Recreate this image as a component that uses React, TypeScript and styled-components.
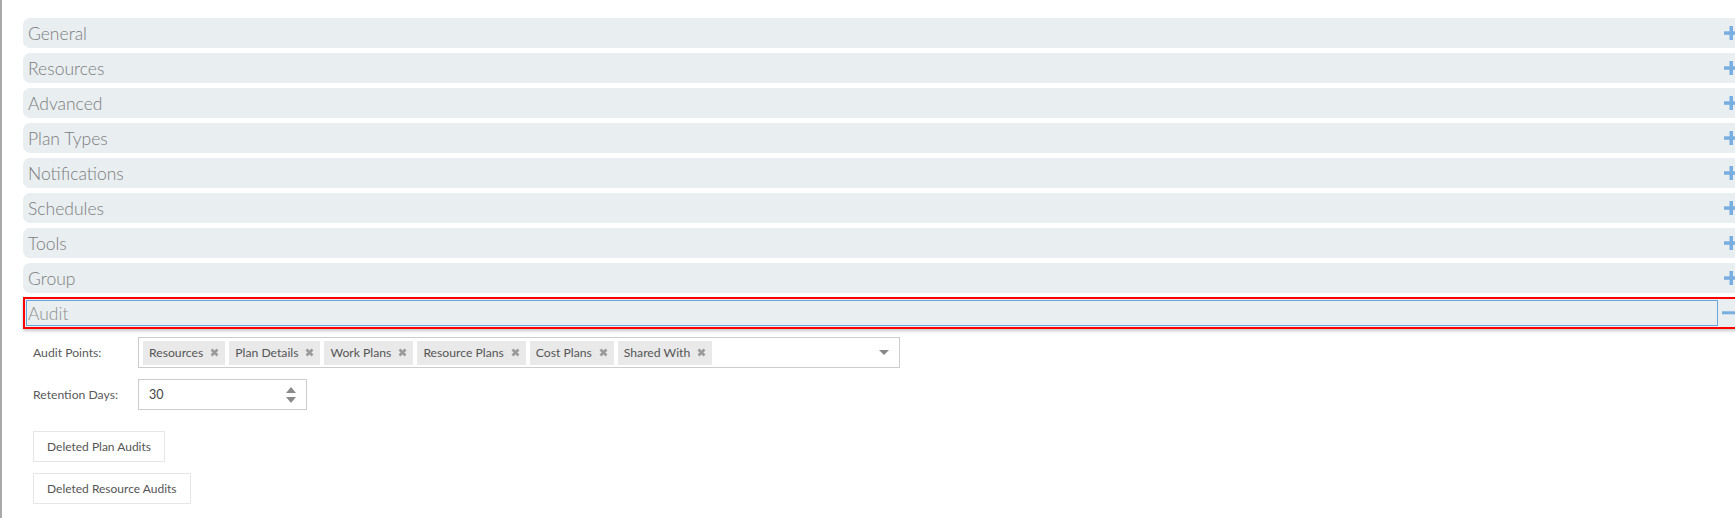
import React, { FC, ReactElement } from 'react';
import styled, { createGlobalStyle, css } from 'styled-components';

const GlobalStyle = createGlobalStyle`
  html, body {
    margin: 0;
    padding: 0;
    overflow: hidden;
    background: #fff;
  }

  body {
    font-family: Lato, "Open Sans", "Liberation Sans", sans-serif;
  }
`;

const Page = styled.div`
  box-sizing: border-box;
  width: calc(100vw + 5px);
  min-height: 518px;
  border-left: 2px solid #a9a9a9;
  padding: 18px 0 0 21px;
  display: flex;
  flex-direction: column;
`;

const Accordion = styled.div`
  display: flex;
  flex-direction: column;
  gap: 5px;
`;

interface HeaderProps {
  active?: boolean;
};

const Header = styled.div<HeaderProps>`
  box-sizing: border-box;
  display: flex;
  align-items: center;
  gap: 4px;
  height: 30px;
  padding: 0 2px 0 5px;
  background: #e9eef1;
  border-radius: 7px 0 0 7px;

  ${({ active }) =>
  active &&
  css`
    height: 32px;
    margin: -1px 0;
    padding: 1px 2px 1px 1px;
    border: 2px solid #ff0000;
    border-radius: 0;
    box-shadow: 0 2px 3px rgba(0, 0, 0, 0.22);
  `}
`;

const Title = styled.div<HeaderProps>`
  box-sizing: border-box;
  flex: 1;
  font-size: 17.5px;
  font-weight: 300;
  color: #7c7c7c;
  white-space: nowrap;

  ${({ active }) =>
  active &&
  css`
    align-self: stretch;
    display: flex;
    align-items: center;
    padding-left: 1px;
    border: 1px solid #6aa6de;
    color: #8e8e8e;
  `}
`;

const ToggleIcon = styled.svg`
  flex: none;
  width: 14px;
  height: 14px;
  fill: #78aee0;
`;

const Body = styled.div`
  display: flex;
  flex-direction: column;
  padding: 9px 0 0 10px;
`;

const FieldRow = styled.div`
  display: grid;
  grid-template-columns: 105px auto;
  align-items: center;
  justify-content: start;
  margin-bottom: 11px;
`;

const Label = styled.div`
  font-size: 12.2px;
  color: #5a5a5a;
`;

const MultiSelect = styled.div`
  box-sizing: border-box;
  display: flex;
  align-items: center;
  gap: 4px;
  width: 762px;
  height: 31px;
  padding: 0 10px 0 4px;
  border: 1px solid #ccc;
`;

const Tag = styled.div`
  display: flex;
  align-items: center;
  gap: 7px;
  height: 24px;
  padding: 0 6px;
  background: #e9e9e9;
  font-size: 12.2px;
  color: #555;
  white-space: nowrap;
`;

const TagClose = styled.svg`
  width: 9px;
  height: 9px;
  stroke: #9a9a9a;
  stroke-width: 2.6;
`;

const Caret = styled.svg`
  margin-left: auto;
  width: 10px;
  height: 5px;
  fill: #888;
`;

const NumberBox = styled.div`
  box-sizing: border-box;
  display: flex;
  align-items: center;
  width: 169px;
  height: 31px;
  padding: 0 10px;
  border: 1px solid #ccc;
  font-size: 12.5px;
  color: #444;
`;

const Spinner = styled.div`
  margin-left: auto;
  display: flex;
  flex-direction: column;
  gap: 4px;
`;

const SpinArrow = styled.svg`
  display: block;
  width: 10px;
  height: 6px;
  fill: #8a8a8a;
`;

const Buttons = styled.div`
  display: flex;
  flex-direction: column;
  align-items: flex-start;
  gap: 11px;
  margin-top: 10px;
`;

const Button = styled.button`
  box-sizing: border-box;
  height: 31px;
  padding: 0 13px;
  background: #fff;
  border: 1px solid #e6e6e6;
  font-family: inherit;
  font-size: 12px;
  color: #555;
`;

const sections = ['General', 'Resources', 'Advanced', 'Plan Types', 'Notifications', 'Schedules', 'Tools', 'Group'];
const auditPoints = ['Resources', 'Plan Details', 'Work Plans', 'Resource Plans', 'Cost Plans', 'Shared With'];

const Plus: FC = (): ReactElement =>
  <ToggleIcon viewBox="0 0 14 14">
    <rect x="5.5" y="0" width="3.5" height="14" />
    <rect x="0" y="5.3" width="14" height="3.5" />
  </ToggleIcon>

const Minus: FC = (): ReactElement =>
  <ToggleIcon viewBox="0 0 14 14">
    <rect x="0" y="5.3" width="14" height="3" />
  </ToggleIcon>

const App: FC = (): ReactElement =>
  <Page>
    <GlobalStyle />
    <Accordion>
      {sections.map(name =>
        <Header key={name}>
          <Title>{name}</Title>
          <Plus />
        </Header>
      )}
      <Header active>
        <Title active>Audit</Title>
        <Minus />
      </Header>
    </Accordion>
    <Body>
      <FieldRow>
        <Label>Audit Points:</Label>
        <MultiSelect>
          {auditPoints.map(point =>
            <Tag key={point}>
              {point}
              <TagClose viewBox="0 0 9 9">
                <path d="M1.5 1.5 L7.5 7.5 M7.5 1.5 L1.5 7.5" />
              </TagClose>
            </Tag>
          )}
          <Caret viewBox="0 0 10 5">
            <path d="M0 0 H10 L5 5 Z" />
          </Caret>
        </MultiSelect>
      </FieldRow>
      <FieldRow>
        <Label>Retention Days:</Label>
        <NumberBox>
          30
          <Spinner>
            <SpinArrow viewBox="0 0 10 6"><path d="M0 6 H10 L5 0 Z" /></SpinArrow>
            <SpinArrow viewBox="0 0 10 6"><path d="M0 0 H10 L5 6 Z" /></SpinArrow>
          </Spinner>
        </NumberBox>
      </FieldRow>
      <Buttons>
        <Button>Deleted Plan Audits</Button>
        <Button>Deleted Resource Audits</Button>
      </Buttons>
    </Body>
  </Page>

export default App;
